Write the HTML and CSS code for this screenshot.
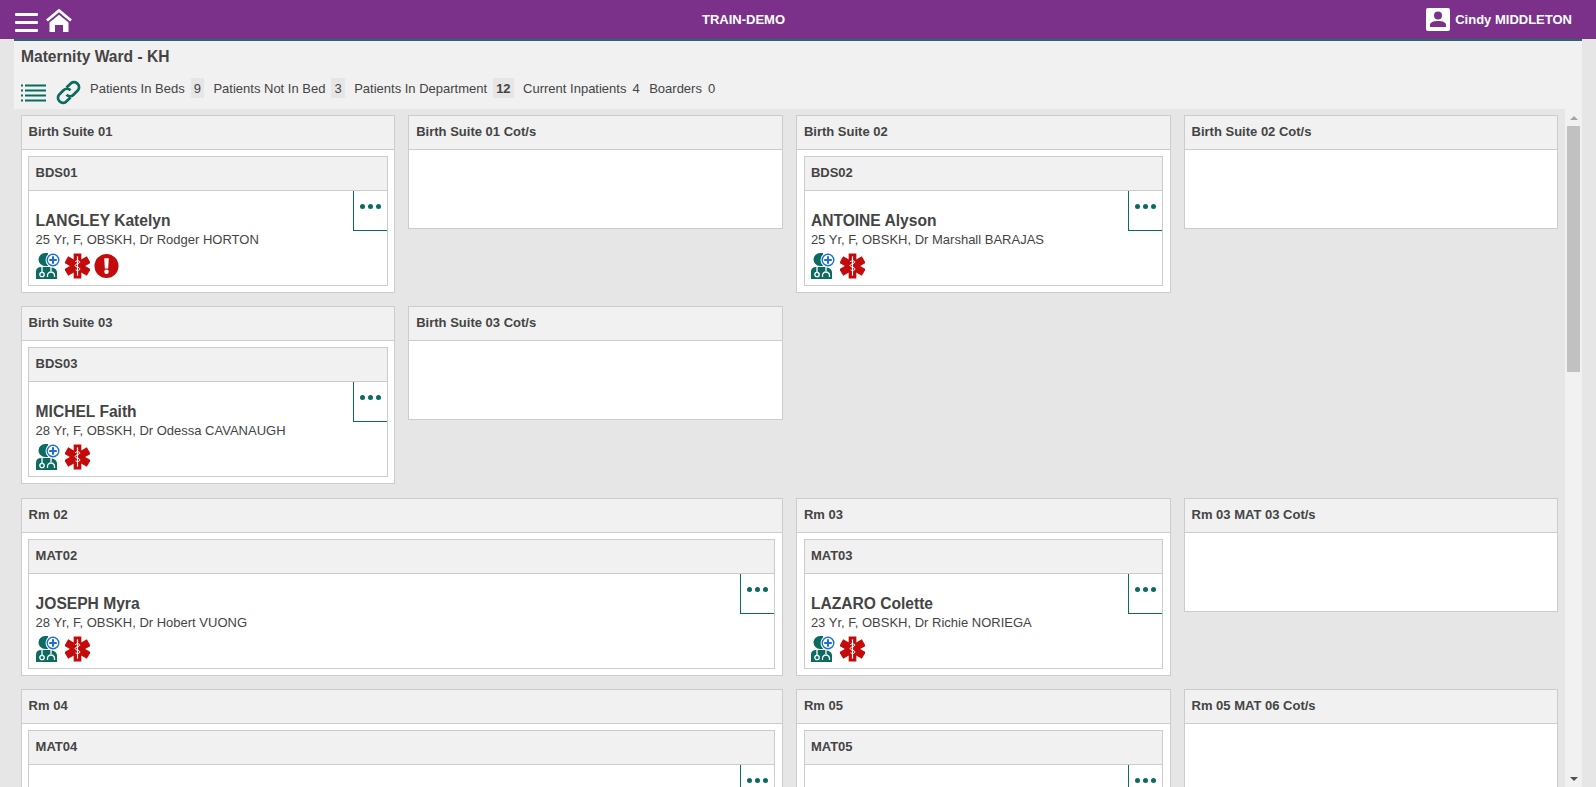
FILE: index.html
```html
<!DOCTYPE html>
<html lang="en">
<head>
  <meta charset="UTF-8">
  <title>Maternity Ward - KH</title>
  <link rel="stylesheet" href="styles.css">
</head>
<body>

  <svg class="icon-defs" width="0" height="0">
    <symbol id="i-doctor" viewBox="0 0 24 26">
      <path d="M9 0a6.500 6.500 0 1 0 0 13h3V0z" fill="#0b6b60"/>
      <path d="M0 26v-7.500C0 15.500 2 14 5 14h9c3 0 6 1.500 7 4.500V26z" fill="#0b6b60"/>
      <circle cx="17" cy="7" r="7.500" fill="#fff"/>
      <circle cx="17" cy="7" r="5.800" fill="#fff" stroke="#1d6fd1" stroke-width="1.400"/>
      <path d="M17 3.200v7.600M13.200 7h7.600" stroke="#1d6fd1" stroke-width="2"/>
      <path d="M6 14v5M15 14v4" fill="none" stroke="#fff" stroke-width="1.300"/>
      <circle cx="6" cy="21.500" r="2.200" fill="none" stroke="#fff" stroke-width="1.300"/>
      <path d="M11.500 24v-1.500a3.500 3.500 0 0 1 7 0V24" fill="none" stroke="#fff" stroke-width="1.300"/>
    </symbol>
    <symbol id="i-star" viewBox="0 0 26 26">
      <g fill="#c40b0b">
        <rect x="9" y="0" width="8" height="26"/>
        <rect x="9" y="-.500" width="8" height="27" transform="rotate(60 13 13)"/>
        <rect x="9" y="-.500" width="8" height="27" transform="rotate(120 13 13)"/>
      </g>
      <path d="M13 3v20" stroke="#fff" stroke-width="1.200"/>
      <path d="M10.500 8.500c2-1.500 5-1 5 .5s-5 1.500-5 3.500 5 1.500 5 3.500-3 2-4.500 1" fill="none" stroke="#fff" stroke-width="1"/>
    </symbol>
    <symbol id="i-alert" viewBox="0 0 26 26">
      <circle cx="13" cy="13" r="12.500" fill="#c40b0b"/>
      <path d="M10.600 5h4.800l-.7 10.500h-3.400z" fill="#fff"/>
      <circle cx="13" cy="19" r="2.300" fill="#fff"/>
    </symbol>
  </svg>

  <header class="topbar">
    <div class="topbar-left">
      <div class="burger"><span></span><span></span><span></span></div>
      <svg class="home" viewBox="0 0 26 24">
        <path d="M1 11.500 13 1.500l12 10" fill="none" stroke="#fff" stroke-width="2.800"/>
        <path d="M3.500 13.500 13 5.800l9.500 7.700V23H17v-7H9v7H3.500z" fill="#fff"/>
      </svg>
    </div>
    <div class="topbar-title">TRAIN-DEMO</div>
    <div class="topbar-user">
      <svg class="user-icon" viewBox="0 0 24 23">
        <rect width="24" height="23" rx="2" fill="#fff"/>
        <circle cx="12" cy="7.500" r="4" fill="#7b3189"/>
        <path d="M4 19v-2c0-2.500 3-4 8-4s8 1.500 8 4v2z" fill="#7b3189"/>
      </svg>
      <span>Cindy MIDDLETON</span>
    </div>
  </header>

  <div class="panel">
    <div class="panel-head">
      <h1>Maternity Ward - KH</h1>
      <div class="stats">
        <svg class="list-icon" viewBox="0 0 25 18">
          <path d="M0 1.500h2M4 1.500h21M0 6.500h2M4 6.500h21M0 11.500h2M4 11.500h21M0 16.500h2M4 16.500h21" stroke="#0b6b60" stroke-width="2"/>
        </svg>
        <svg class="link-icon" viewBox="0 0 25 25">
          <path d="M10.500 7.500 15 3.200a5 5 0 0 1 7 7l-4.500 4.500a5 5 0 0 1-7 0M14.500 17.500 10 21.800a5 5 0 0 1-7-7l4.500-4.500a5 5 0 0 1 7 0" fill="none" stroke="#0b6b60" stroke-width="2.800"/>
        </svg>
        <span class="stat">Patients In Beds</span><span class="count shaded">9</span>
        <span class="stat">Patients Not In Bed</span><span class="count shaded">3</span>
        <span class="stat">Patients In Department</span><span class="count shaded total">12</span>
        <span class="stat">Current Inpatients</span><span class="count">4</span>
        <span class="stat">Boarders</span><span class="count">0</span>
      </div>
    </div>

    <div class="panel-main">
      <div class="board">

        <section class="room">
          <div class="room-head">Birth Suite 01</div>
          <div class="room-body">
            <div class="bed">
              <div class="bed-head">BDS01</div>
              <div class="bed-body">
                <div class="more"><i></i><i></i><i></i></div>
                <div class="pt-name">LANGLEY Katelyn</div>
                <div class="pt-info">25 Yr, F, OBSKH, Dr Rodger HORTON</div>
                <div class="pt-icons">
                  <svg class="ic-doctor"><use href="#i-doctor"/></svg>
                  <svg class="ic"><use href="#i-star"/></svg>
                  <svg class="ic"><use href="#i-alert"/></svg>
                </div>
              </div>
            </div>
          </div>
        </section>
        <section class="room cot">
          <div class="room-head">Birth Suite 01 Cot/s</div>
          <div class="room-body"></div>
        </section>
        <section class="room">
          <div class="room-head">Birth Suite 02</div>
          <div class="room-body">
            <div class="bed">
              <div class="bed-head">BDS02</div>
              <div class="bed-body">
                <div class="more"><i></i><i></i><i></i></div>
                <div class="pt-name">ANTOINE Alyson</div>
                <div class="pt-info">25 Yr, F, OBSKH, Dr Marshall BARAJAS</div>
                <div class="pt-icons">
                  <svg class="ic-doctor"><use href="#i-doctor"/></svg>
                  <svg class="ic"><use href="#i-star"/></svg>
                </div>
              </div>
            </div>
          </div>
        </section>
        <section class="room cot">
          <div class="room-head">Birth Suite 02 Cot/s</div>
          <div class="room-body"></div>
        </section>

        <section class="room">
          <div class="room-head">Birth Suite 03</div>
          <div class="room-body">
            <div class="bed">
              <div class="bed-head">BDS03</div>
              <div class="bed-body">
                <div class="more"><i></i><i></i><i></i></div>
                <div class="pt-name">MICHEL Faith</div>
                <div class="pt-info">28 Yr, F, OBSKH, Dr Odessa CAVANAUGH</div>
                <div class="pt-icons">
                  <svg class="ic-doctor"><use href="#i-doctor"/></svg>
                  <svg class="ic"><use href="#i-star"/></svg>
                </div>
              </div>
            </div>
          </div>
        </section>
        <section class="room cot">
          <div class="room-head">Birth Suite 03 Cot/s</div>
          <div class="room-body"></div>
        </section>
        <div class="row-gap"></div>

        <section class="room wide">
          <div class="room-head">Rm 02</div>
          <div class="room-body">
            <div class="bed">
              <div class="bed-head">MAT02</div>
              <div class="bed-body">
                <div class="more"><i></i><i></i><i></i></div>
                <div class="pt-name">JOSEPH Myra</div>
                <div class="pt-info">28 Yr, F, OBSKH, Dr Hobert VUONG</div>
                <div class="pt-icons">
                  <svg class="ic-doctor"><use href="#i-doctor"/></svg>
                  <svg class="ic"><use href="#i-star"/></svg>
                </div>
              </div>
            </div>
          </div>
        </section>
        <section class="room">
          <div class="room-head">Rm 03</div>
          <div class="room-body">
            <div class="bed">
              <div class="bed-head">MAT03</div>
              <div class="bed-body">
                <div class="more"><i></i><i></i><i></i></div>
                <div class="pt-name">LAZARO Colette</div>
                <div class="pt-info">23 Yr, F, OBSKH, Dr Richie NORIEGA</div>
                <div class="pt-icons">
                  <svg class="ic-doctor"><use href="#i-doctor"/></svg>
                  <svg class="ic"><use href="#i-star"/></svg>
                </div>
              </div>
            </div>
          </div>
        </section>
        <section class="room cot">
          <div class="room-head">Rm 03 MAT 03 Cot/s</div>
          <div class="room-body"></div>
        </section>

        <section class="room wide">
          <div class="room-head">Rm 04</div>
          <div class="room-body">
            <div class="bed">
              <div class="bed-head">MAT04</div>
              <div class="bed-body">
                <div class="more"><i></i><i></i><i></i></div>
              </div>
            </div>
          </div>
        </section>
        <section class="room">
          <div class="room-head">Rm 05</div>
          <div class="room-body">
            <div class="bed">
              <div class="bed-head">MAT05</div>
              <div class="bed-body">
                <div class="more"><i></i><i></i><i></i></div>
              </div>
            </div>
          </div>
        </section>
        <section class="room cot">
          <div class="room-head">Rm 05 MAT 06 Cot/s</div>
          <div class="room-body"></div>
        </section>

      </div>

      <div class="scrollbar">
        <div class="arrow-up"></div>
        <div class="thumb"></div>
        <div class="arrow-down"></div>
      </div>
    </div>
  </div>

</body>
</html>
```

FILE: styles.css
```css
html, body { height: 100%; }
body { margin: 0; height: 787px; overflow: hidden; background: #e6e6e6; color: #444; font-family: "Liberation Sans", Arial, sans-serif; font-size: 13px; display: flex; flex-direction: column; }
.icon-defs { display: block; height: 0; }

/* top bar */
.topbar { height: 39px; flex: none; background: #7b3189; color: #fff; display: flex; align-items: center; justify-content: space-between; position: relative; }
.topbar-left { align-self: stretch; display: flex; align-items: flex-start; padding: 9px 0 0 15px; }
.burger { width: 23px; margin-top: 4px; display: flex; flex-direction: column; gap: 5px; }
.burger span { display: block; height: 3px; background: #fff; border-radius: 1px; }
.home { width: 26px; height: 24px; margin-left: 8px; }
.topbar-title { font-weight: bold; position: absolute; left: 0; right: 0; top: 12px; text-align: center; padding-right: 109px; }
.topbar-user { display: flex; align-items: center; font-weight: bold; gap: 5px; padding-right: 24px; }
.user-icon { width: 24px; height: 23px; }

/* panel */
.panel { flex: 1; min-height: 0; margin: 0 14px; border-top: 2px solid #27676e; display: flex; flex-direction: column; }
.panel-head { background: #f1f1f1; height: 68px; flex: none; padding: 0 7px; }
.panel-head h1 { margin: 0; padding-top: 7px; font-size: 15.6px; line-height: 17px; font-weight: bold; }
.stats { display: flex; align-items: flex-start; margin-top: 13px; line-height: 22px; }
.list-icon { width: 25px; height: 18px; margin-top: 6px; }
.link-icon { width: 25px; height: 25px; margin: 2px 9px 0 10px; }
.count { margin: 0 9.5px 0 6px; }
.count.shaded { background: #e6e6e6; padding: 0 3px; height: 20px; }
.count.total { font-weight: bold; }

.panel-main { flex: 1; min-height: 0; display: flex; }
.board { flex: 1; min-width: 0; overflow: hidden; padding: 6px 6.6px; display: grid; grid-template-columns: repeat(4, 1fr); column-gap: 12.8px; row-gap: 13.3px; align-items: start; align-content: start; }
.room { background: #fff; border: 1px solid #ccc; }
.room.wide { grid-column: span 2; }
.row-gap { grid-column: span 2; }
.room-head, .bed-head { height: 33px; line-height: 32.1px; padding: 0 7px; background: #f1f1f1; border-bottom: 1px solid #ccc; font-weight: bold; }
.bed-head { padding: 0 6.3px; }
.room-body { padding: 6px 6.7px; }
.room.cot .room-body { height: 66px; }

.bed { border: 1px solid #ccc; }
.bed-body { height: 94px; padding: 0 6.3px; position: relative; }
.more { position: absolute; top: 0; right: 0; width: 33px; height: 26px; border-left: 1px solid #0b6b60; border-bottom: 1px solid #0b6b60; display: flex; justify-content: center; gap: 3px; padding-top: 13px; }
.more i { display: block; width: 5px; height: 5px; border-radius: 50%; background: #0b6b60; }
.pt-name { padding-top: 20px; font-size: 15.6px; line-height: 20px; font-weight: bold; }
.pt-info { line-height: 16px; margin-top: 1px; }
.pt-icons { display: flex; gap: 4px; margin-top: 5px; }
.ic-doctor { width: 24px; height: 26px; margin-right: 1px; }
.ic { width: 25px; height: 26px; }

/* scrollbar is only drawn, page does not scroll */
.scrollbar { width: 17px; flex: none; background: #f1f1f1; display: flex; flex-direction: column; align-items: center; position: relative; }
.thumb { width: 13px; height: 246px; background: #c1c1c1; margin-top: 6px; }
.arrow-up { width: 0; height: 0; margin-top: 7px; border: 4px solid transparent; border-top: 0; border-bottom-color: #a3a3a3; }
.arrow-down { width: 0; height: 0; position: absolute; bottom: 6px; border: 4px solid transparent; border-bottom: 0; border-top-color: #505050; }
```
